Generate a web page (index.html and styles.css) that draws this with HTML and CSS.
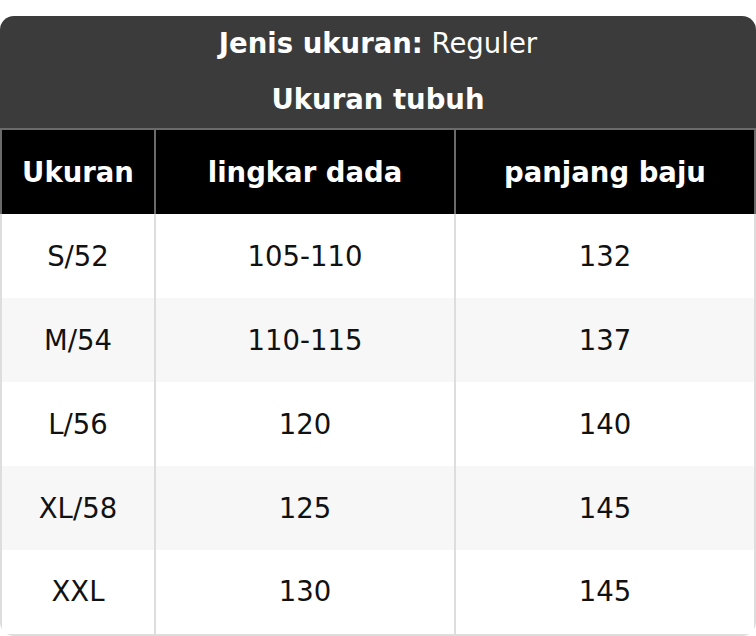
FILE: index.html
```html
<!DOCTYPE html>
<html lang="id">
<head>
<meta charset="utf-8">
<link rel="stylesheet" href="styles.css">
</head>
<body>
<div class="card">
  <div class="title">
    <div class="title-line"><b>Jenis ukuran:</b> Reguler</div>
    <div class="title-line"><b>Ukuran tubuh</b></div>
  </div>
  <div class="grid">
    <div class="cell head c1">Ukuran</div>
    <div class="cell head c2">lingkar dada</div>
    <div class="cell head c3">panjang baju</div>

    <div class="cell c1">S/52</div>
    <div class="cell c2">105-110</div>
    <div class="cell c3">132</div>

    <div class="cell alt c1">M/54</div>
    <div class="cell alt c2">110-115</div>
    <div class="cell alt c3">137</div>

    <div class="cell c1">L/56</div>
    <div class="cell c2">120</div>
    <div class="cell c3">140</div>

    <div class="cell alt c1">XL/58</div>
    <div class="cell alt c2">125</div>
    <div class="cell alt c3">145</div>

    <div class="cell last c1">XXL</div>
    <div class="cell last c2">130</div>
    <div class="cell last c3">145</div>
  </div>
</div>
</body>
</html>
```
FILE: styles.css
```css
html, body {
  margin: 0;
  padding: 0;
  background: #ffffff;
}
body {
  padding-top: 16px;
  font-family: "DejaVu Sans", Verdana, sans-serif;
}
.card {
  width: 756px;
  border-radius: 14px;
  overflow: hidden;
}
.title {
  background: #3b3b3b;
  color: #ffffff;
  text-align: center;
  border-bottom: 2px solid #6a6a6a;
}
.title-line {
  height: 56px;
  line-height: 55px;
  font-size: 27.5px;
}
.grid {
  display: grid;
  grid-template-columns: 154px 300px 302px;
}
.cell {
  box-sizing: border-box;
  height: 84px;
  display: flex;
  align-items: center;
  justify-content: center;
  font-size: 27.5px;
  color: #111111;
  background: #ffffff;
  border-left: 2px solid #dddddd;
}
.cell.c3 {
  border-right: 2px solid #dddddd;
}
.cell.alt {
  background: #f7f7f7;
}
.cell.last {
  height: 86px;
  padding-bottom: 2px;
  border-bottom: 2px solid #dddddd;
}
.cell.head {
  background: #000000;
  color: #ffffff;
  font-weight: bold;
  border-left-color: #6a6a6a;
  border-right-color: #6a6a6a;
}
```
